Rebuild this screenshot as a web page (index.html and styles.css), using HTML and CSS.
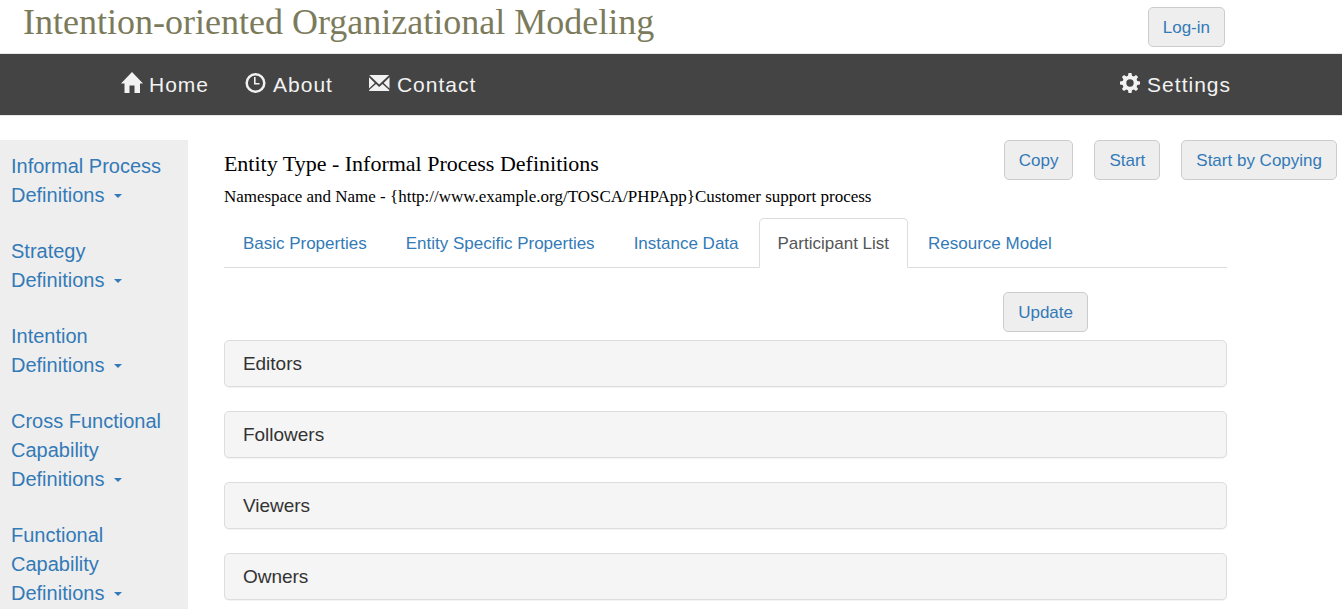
FILE: index.html
```html
<!DOCTYPE html>
<html lang="en">
<head>
<meta charset="utf-8">
<meta name="viewport" content="width=device-width, initial-scale=1">
<title>Intention-oriented Organizational Modeling</title>
<link rel="stylesheet" href="styles.css">
</head>
<body>
<header class="header">
  <h1 class="brand">Intention-oriented Organizational Modeling</h1>
  <button class="btn" type="button">Log-in</button>
</header>
<nav class="navbar">
  <a class="nav-link" href="#"><svg class="icon" viewBox="0 0 22 22" aria-hidden="true"><path d="M11 0 22 11.500H19V21H13.500V13.500H8.500V21H3.500V11.500H0Z"/></svg>Home</a>
  <a class="nav-link" href="#"><svg class="icon" viewBox="0 0 22 22" aria-hidden="true"><circle class="ring" cx="10.500" cy="11" r="8.800"/><path d="M9 5H10.600V11H14.500V12.600H9Z"/></svg>About</a>
  <a class="nav-link" href="#"><svg class="icon" viewBox="0 0 22 22" aria-hidden="true"><path d="M.2 3H20.200L10.200 12.500ZM0 5.200 5.800 11 0 16.500ZM20.500 5.200 14.700 11 20.500 16.500ZM7 12 10.200 15 13.500 12 20.200 18V19H.2V18Z"/></svg>Contact</a>
  <a class="nav-link nav-end" href="#"><svg class="icon" viewBox="0 0 22 22" aria-hidden="true"><path fill-rule="evenodd" d="M9.500 1H12.500L13 3.700 14.800 4.400 17 2.900 19.100 5 17.600 7.200 18.300 9 21 9.500V12.500L18.300 13 17.600 14.800 19.100 17 17 19.100 14.800 17.600 13 18.300 12.500 21H9.500L9 18.300 7.200 17.600 5 19.100 2.900 17 4.400 14.800 3.700 13 1 12.500V9.500L3.700 9 4.400 7.200 2.900 5 5 2.900 7.200 4.400 9 3.700ZM11 7.300A3.700 3.700 0 1 0 11 14.700 3.700 3.700 0 1 0 11 7.300Z"/></svg>Settings</a>
</nav>
<div class="page">
  <aside class="sidebar">
    <a class="side-link" href="#">Informal Process Definitions <span class="caret"></span></a>
    <a class="side-link" href="#">Strategy Definitions <span class="caret"></span></a>
    <a class="side-link" href="#">Intention Definitions <span class="caret"></span></a>
    <a class="side-link" href="#">Cross Functional Capability Definitions <span class="caret"></span></a>
    <a class="side-link" href="#">Functional Capability Definitions <span class="caret"></span></a>
  </aside>
  <main class="main">
    <div class="top">
      <div class="headings">
        <h2 class="title">Entity Type - Informal Process Definitions</h2>
        <p class="subtitle">Namespace and Name - {http://www.example.org/TOSCA/PHPApp}Customer support process</p>
      </div>
      <div class="actions">
        <button class="btn" type="button">Copy</button>
        <button class="btn" type="button">Start</button>
        <button class="btn" type="button">Start by Copying</button>
      </div>
    </div>
    <div class="content">
      <nav class="tabs">
        <a class="tab" href="#">Basic Properties</a>
        <a class="tab" href="#">Entity Specific Properties</a>
        <a class="tab" href="#">Instance Data</a>
        <a class="tab active" href="#" aria-current="page">Participant List</a>
        <a class="tab" href="#">Resource Model</a>
      </nav>
      <div class="toolbar"><button class="btn" type="button">Update</button></div>
      <div class="panels">
        <section class="panel"><h3 class="panel-title">Editors</h3></section>
        <section class="panel"><h3 class="panel-title">Followers</h3></section>
        <section class="panel"><h3 class="panel-title">Viewers</h3></section>
        <section class="panel"><h3 class="panel-title">Owners</h3></section>
      </div>
    </div>
  </main>
</div>
</body>
</html>
```

FILE: styles.css
```css
* {
  box-sizing: border-box;
}

body {
  display: flex;
  flex-direction: column;
  min-height: 100vh;
  margin: 0;
  background: #fff;
  color: #333;
  font: 17px/24px "Liberation Sans", Arial, sans-serif;
}

h1, h2, h3, p {
  margin: 0;
  font-weight: 400;
}

a {
  color: #337ab7;
  text-decoration: none;
}

.header {
  display: flex;
  justify-content: space-between;
  align-items: flex-start;
  padding: 0 117px 6px 23px;
}

.brand {
  color: #7b7b5b;
  font: 36px/44px "Liberation Serif", "Times New Roman", serif;
}

.header .btn {
  margin-top: 7px;
}

.btn {
  padding: 8px 14px 6px;
  border: 1px solid #ccc;
  border-radius: 5px;
  background: #eee;
  color: #337ab7;
  font: inherit;
  white-space: nowrap;
}

.navbar {
  display: flex;
  padding: 0 93px 0 103px;
  border: solid #e7e7e7;
  border-width: 1px 0;
  background: #444;
}

.nav-link {
  display: flex;
  align-items: center;
  gap: 6px;
  padding: 16px 18px 15px;
  color: #f2f2f2;
  font-size: 21px;
  line-height: 30px;
  letter-spacing: 1px;
}

.nav-end {
  margin-left: auto;
}

.icon {
  width: 22px;
  height: 22px;
  margin-bottom: 5px;
  fill: currentColor;
}

.ring {
  fill: none;
  stroke: currentColor;
  stroke-width: 2.5;
}

.page {
  display: grid;
  flex: 1;
  grid-template-columns: 14% 1fr;
  margin-top: 24px;
}

.sidebar {
  display: flex;
  flex-direction: column;
  gap: 27px;
  padding: 12px 20px 0 11px;
  background: #eee;
  font-size: 20px;
  line-height: 29px;
}

.caret {
  display: inline-block;
  margin: 0 0 2px 4px;
  border: solid transparent;
  border-width: 4px 4px 0;
  border-top-color: currentColor;
  vertical-align: middle;
}

.main {
  padding: 0 5px 8px 36px;
}

.top {
  display: flex;
  justify-content: space-between;
  color: #000;
  font-family: "Liberation Serif", "Times New Roman", serif;
}

.title {
  padding-top: 10px;
  font-size: 22px;
  line-height: 28px;
}

.subtitle {
  padding-top: 7px;
  font-size: 17px;
  line-height: 24px;
}

.actions {
  display: flex;
  align-items: flex-start;
  gap: 21px;
  font-family: "Liberation Sans", Arial, sans-serif;
}

.content {
  padding-right: 110px;
}

.tabs {
  display: flex;
  gap: 1px;
  margin-top: 9px;
  border-bottom: 1px solid #ddd;
}

.tab {
  margin-bottom: -1px;
  padding: 13px 18px 11px;
  border: 1px solid transparent;
  border-radius: 5px 5px 0 0;
}

.tab.active {
  border-color: #ddd #ddd #fff;
  background: #fff;
  color: #555;
}

.toolbar {
  display: flex;
  justify-content: flex-end;
  padding: 24px 139px 8px 0;
}

.panels {
  display: flex;
  flex-direction: column;
  gap: 24px;
}

.panel {
  padding: 11px 18px;
  border: 1px solid #ddd;
  border-radius: 5px;
  background: #f5f5f5;
  box-shadow: 0 1px 1px rgba(0, 0, 0, 0.05);
}

.panel-title {
  font-size: 19px;
  line-height: 23px;
}
```
